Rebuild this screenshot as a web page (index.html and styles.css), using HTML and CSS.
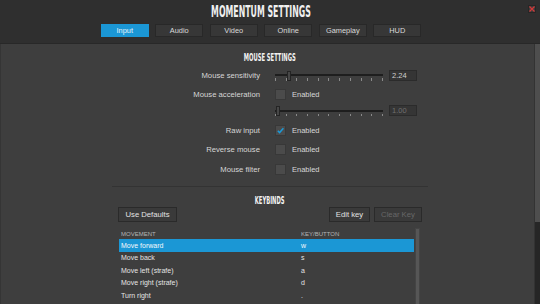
FILE: index.html
```html
<!DOCTYPE html>
<html>
<head>
<meta charset="utf-8">
<link rel="stylesheet" href="styles.css">
</head>
<body>
<div class="window">
  <header class="titlebar">
    <div class="title"><span class="cond">MOMENTUM SETTINGS</span></div>
    <nav class="tabs">
      <div class="tab active">Input</div>
      <div class="tab">Audio</div>
      <div class="tab">Video</div>
      <div class="tab">Online</div>
      <div class="tab">Gameplay</div>
      <div class="tab">HUD</div>
    </nav>
    <div class="close"><svg width="6" height="6" viewBox="0 0 6 6"><path d="M0.5 0.5L5.5 5.5M5.5 0.5L0.5 5.5" stroke="#d03a3a" stroke-width="1.3"/></svg></div>
  </header>
  <div class="main">
    <div class="content">
      <section class="panel">
        <h2 class="heading"><span class="cond">MOUSE SETTINGS</span></h2>
        <div class="form">
          <div class="row">
            <div class="label">Mouse sensitivity</div>
            <div class="control">
              <div class="slider">
                <div class="track"></div>
                <div class="ticks"><i></i><i></i><i></i><i></i><i></i><i></i><i></i><i></i><i></i><i></i><i></i></div>
                <div class="thumb" style="left:12px"></div>
              </div>
              <div class="value">2.24</div>
            </div>
          </div>
          <div class="row">
            <div class="label">Mouse acceleration</div>
            <div class="control"><div class="check"></div><span class="opt">Enabled</span></div>
          </div>
          <div class="row tight">
            <div class="label"></div>
            <div class="control">
              <div class="slider">
                <div class="track"></div>
                <div class="ticks"><i></i><i></i><i></i><i></i><i></i><i></i><i></i><i></i><i></i><i></i><i></i></div>
                <div class="thumb" style="left:1px"></div>
              </div>
              <div class="value disabled">1.00</div>
            </div>
          </div>
          <div class="row">
            <div class="label">Raw input</div>
            <div class="control"><div class="check"><svg width="9" height="9" viewBox="0 0 9 9"><path d="M1.8 4.8L3.6 6.6L7.4 2.2" fill="none" stroke="#1b9ad8" stroke-width="1.5"/></svg></div><span class="opt">Enabled</span></div>
          </div>
          <div class="row">
            <div class="label">Reverse mouse</div>
            <div class="control"><div class="check"></div><span class="opt">Enabled</span></div>
          </div>
          <div class="row">
            <div class="label">Mouse filter</div>
            <div class="control"><div class="check"></div><span class="opt">Enabled</span></div>
          </div>
        </div>
        <div class="divider"></div>
        <h2 class="heading kb"><span class="cond">KEYBINDS</span></h2>
        <div class="toolbar">
          <div class="btn wide">Use Defaults</div>
          <div class="spacer"></div>
          <div class="btn edit">Edit key</div>
          <div class="btn disabled">Clear Key</div>
        </div>
        <div class="table">
          <div class="rows">
            <div class="thead"><span class="c1">MOVEMENT</span><span class="c2">KEY/BUTTON</span></div>
            <div class="tr sel"><span class="c1">Move forward</span><span class="c2">w</span></div>
            <div class="tr"><span class="c1">Move back</span><span class="c2">s</span></div>
            <div class="tr"><span class="c1">Move left (strafe)</span><span class="c2">a</span></div>
            <div class="tr"><span class="c1">Move right (strafe)</span><span class="c2">d</span></div>
            <div class="tr"><span class="c1">Turn right</span><span class="c2">.</span></div>
          </div>
          <div class="tscroll"></div>
        </div>
      </section>
    </div>
    <div class="vscroll"><div class="vthumb"></div></div>
  </div>
</div>
</body>
</html>
```
FILE: styles.css
```css
* { box-sizing: border-box; }
html, body { margin: 0; padding: 0; }
body {
  width: 540px;
  height: 304px;
  overflow: hidden;
  background: #3e3e3e;
  font-family: "Liberation Sans", Arial, sans-serif;
  color: #dcdcdc;
  font-size: 7.5px;
}
.window { display: flex; flex-direction: column; height: 304px; }
.titlebar {
  position: relative;
  height: 44px;
  background: #2f2f2f;
  border-bottom: 1px solid #282828;
  padding: 4px 18px 0 0;
  display: flex;
  flex-direction: column;
  align-items: center;
}
.cond {
  display: inline-block;
  font-family: "DejaVu Sans Condensed", "DejaVu Sans", sans-serif;
  font-weight: bold;
  transform: scaleX(0.58);
  white-space: nowrap;
}
.title { font-size: 15px; line-height: 15px; color: #f0f0f0; height: 15px; }
.tabs { display: flex; gap: 6.5px; margin-top: 5px; }
.tab {
  width: 48px; height: 12.5px;
  background: #373737;
  border: 1px solid #282828;
  display: flex; align-items: center; justify-content: center;
  font-size: 7.4px; color: #dadada;
}
.tab.active { background: #1b97d5; border-color: #1b97d5; color: #e8f4fb; }
.close {
  position: absolute; right: 4px; top: 5px;
  width: 8px; height: 8px;
  background: #3a3a3a; border: 1px solid #262626;
  display: flex; align-items: center; justify-content: center;
}
.close svg { display: block; }
.main { flex: 1; display: flex; min-height: 0; }
.content { flex: 1; border-left: 1px solid #353535; overflow: hidden; }
.vscroll { width: 6px; background: #262626; border-left: 1px solid #333; }
.vthumb { height: 178px; background: #4e4e4e; }
.panel { margin-left: 111px; width: 316px; padding-top: 7.5px; }
.heading {
  margin: 0; text-align: center;
  font-size: 10px; line-height: 12px; height: 12px; font-weight: normal; color: #f2f2f2;
}
.form { margin-top: 6px; display: flex; flex-direction: column; }
.row { display: flex; align-items: center; height: 11px; column-gap: 15px; }
.row + .row { margin-top: 8.5px; }
.row.tight { margin-top: 5px; }
.label { width: 148px; text-align: right; font-size: 7.7px; color: #d6d6d6; white-space: nowrap; }
.control { display: flex; align-items: center; gap: 6px; }
.slider { position: relative; width: 108px; height: 11px; }
.track { margin-top: 4.5px; height: 2px; background: #1e1e1e; }
.ticks { display: flex; justify-content: space-between; margin-top: 2px; }
.ticks i { display: block; width: 1px; height: 2.5px; background: #8a8a8a; }
.thumb {
  position: absolute; top: 1px; width: 4px; height: 10px;
  background: #474747; border: 1px solid #242424;
}
.value {
  width: 28px; height: 11px;
  background: #353535; border: 1px solid #2b2b2b;
  font-size: 7.5px; line-height: 9px; padding-left: 2px; color: #cfcfcf;
}
.value.disabled { color: #6f6f6f; }
.check {
  width: 11px; height: 11px;
  background: #4b4b4b; border: 1px solid #383838;
  display: flex; align-items: center; justify-content: center;
}
.check svg { display: block; }
.opt { font-size: 7.5px; color: #d6d6d6; }
.divider { margin-top: 11px; height: 1px; background: #333; }
.heading.kb { margin-top: 8px; }
.toolbar { display: flex; padding: 0 6px; margin-top: 0.5px; gap: 4px; }
.spacer { flex: 1; }
.btn {
  height: 15px; padding: 0 4px;
  background: #3a3a3a; border: 1px solid #2a2a2a;
  display: flex; align-items: center; justify-content: center;
  font-size: 7.7px; color: #e2e2e2;
}
.btn.wide { width: 59px; }
.btn.edit { width: 41px; }
.btn.disabled { color: #686868; width: 48px; }
.table { display: flex; margin: 6px 8px 0 7px; gap: 1px; }
.rows { flex: 1; }
.thead, .tr { display: flex; align-items: center; }
.thead { height: 11px; font-size: 6px; color: #b4b4b4; }
.tr { height: 12.5px; font-size: 7px; color: #e4e4e4; }
.tr.sel { background: #1b97d5; color: #f4f9fc; }
.c1 { width: 182px; padding-left: 2px; }
.c2 { flex: 1; }
.tscroll { width: 5px; height: 80px; background: #565656; border: 1px solid #444; }
```
